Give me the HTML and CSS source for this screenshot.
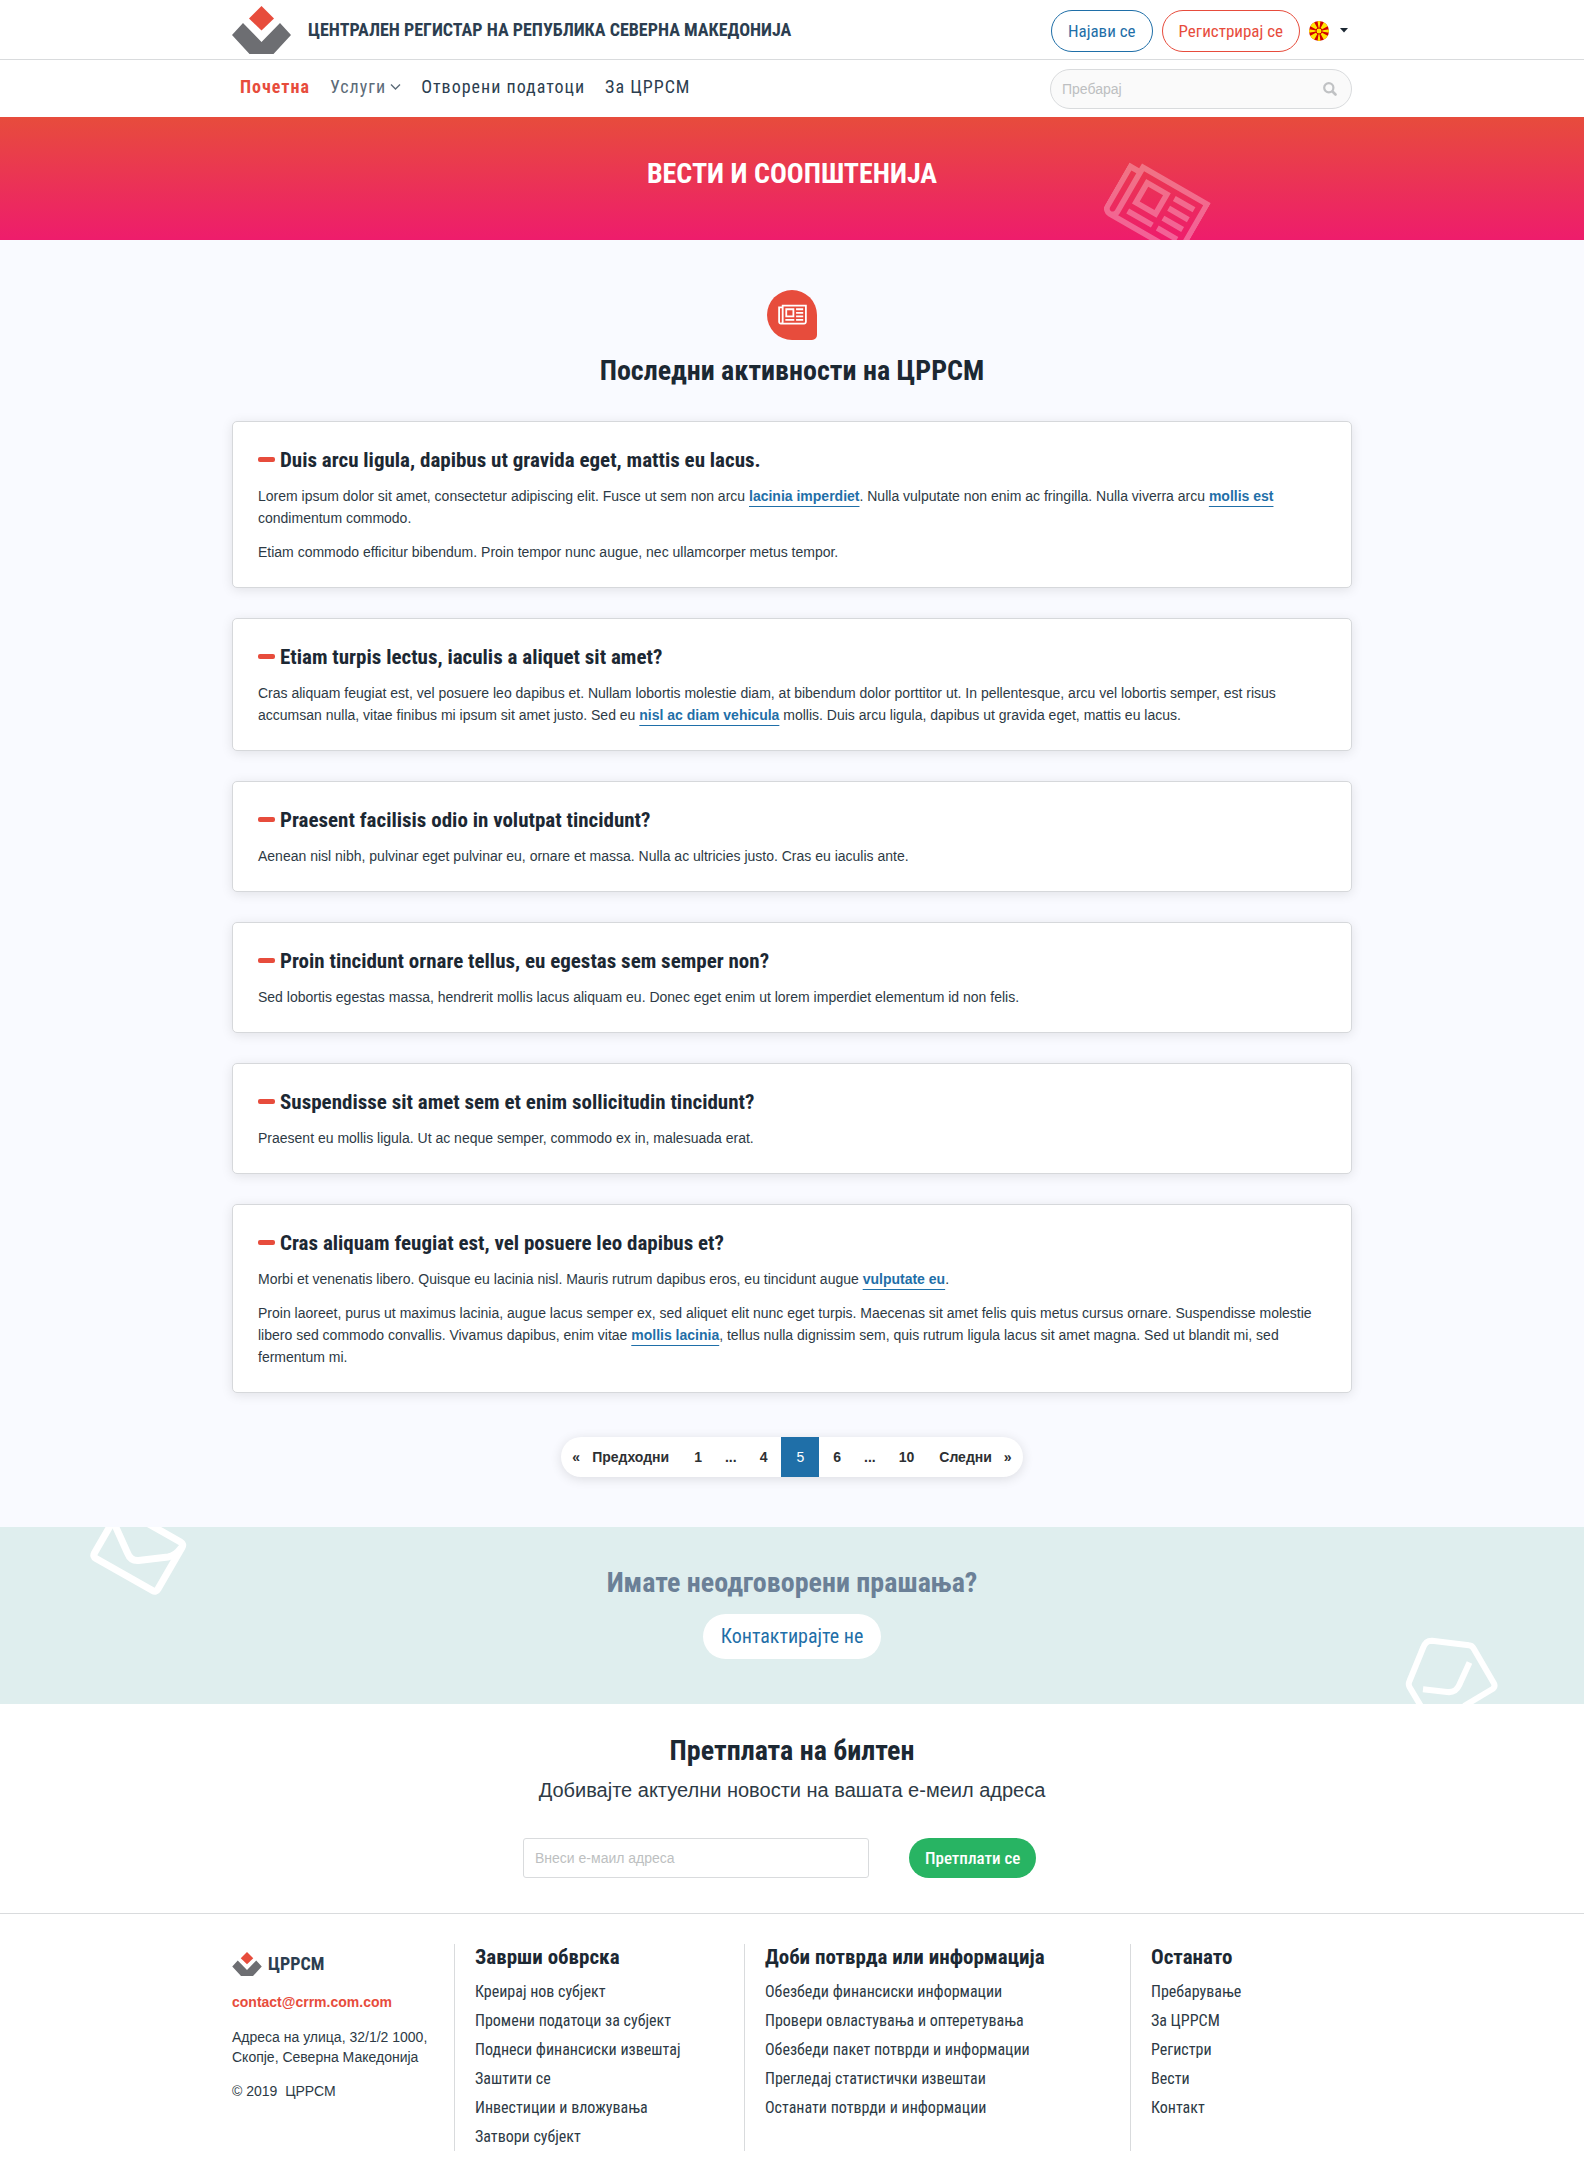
FILE: index.html
```html
<!DOCTYPE html>
<html lang="mk">
<head>
<meta charset="utf-8">
<meta name="viewport" content="width=device-width, initial-scale=1">
<title>Вести и соопштенија | ЦРРСМ</title>
<link rel="stylesheet" href="styles.css">
</head>
<body>
<svg class="sprite" aria-hidden="true">
  <symbol id="logo" viewBox="0 0 59 48">
    <path fill="#e74c3c" d="M29.5 0 42 12.500 29.500 24.500 17 12.500z"/>
    <path fill="#6d6e72" d="M11 17 29.500 36 48 17 59 29 41.500 48H17.500L0 29z"/>
  </symbol>
  <symbol id="news" viewBox="0 -128 2048 1792">
    <path fill="currentColor" d="M1024 384h-384v384h384v-384zm128 640v128h-640v-128h640zm0-768v640h-640v-640h640zm640 768v128h-512v-128h512zm0-256v128h-512v-128h512zm0-256v128h-512v-128h512zm0-256v128h-512v-128h512zm-1536 960v-960h-128v960q0 26 19 45t45 19 45-19 19-45zm1664 0v-1088h-1536v1088q0 33-11 64h1483q26 0 45-19t19-45zm128-1216v1216q0 80-56 136t-136 56h-1664q-80 0-136-56t-56-136v-1088h256v-128h1792z"/>
  </symbol>
</svg>

<header>
  <div class="topbar">
    <div class="container topbar-row">
      <a class="brand" href="#"><svg class="brand-logo" aria-hidden="true"><use href="#logo"/></svg><span>ЦЕНТРАЛЕН РЕГИСТАР НА РЕПУБЛИКА СЕВЕРНА МАКЕДОНИЈА</span></a>
      <div class="account">
        <a class="btn btn-blue" href="#">Најави се</a>
        <a class="btn btn-red" href="#">Регистрирај се</a>
        <button class="lang" type="button" aria-label="Јазик">
          <svg class="flag" viewBox="0 0 20 20" aria-hidden="true">
            <defs><clipPath id="disc"><circle cx="10" cy="10" r="10"/></clipPath></defs>
            <g clip-path="url(#disc)">
              <path fill="#d20000" d="M0 0h20v20H0z"/>
              <path fill="#ffe600" d="M8.500 0h3l-1.500 10zM8.500 20h3l-1.500-10zM0 8.200v3.600L10 10zM20 8.200v3.600L10 10zM1.500 0h3L10 10 0 4.500v-2zM18.500 0h-3L10 10l10-5.500v-2zM1.500 20h3L10 10 0 15.500v2zM18.500 20h-3L10 10l10 5.500v2z"/>
            </g>
            <circle cx="10" cy="10" r="3" fill="#ffe600" stroke="#d20000"/>
          </svg>
          <svg class="caret" viewBox="0 0 8 5" aria-hidden="true"><path fill="#1c2833" d="M0 0h8L4 4.500z"/></svg>
        </button>
      </div>
    </div>
  </div>
  <div class="container navbar">
    <nav>
      <ul class="menu">
        <li><a class="active" href="#">Почетна</a></li>
        <li><a class="open" href="#">Услуги<svg class="chevron" viewBox="0 0 11 8" aria-hidden="true"><path fill="none" stroke="currentColor" stroke-width="1.400" d="M1 1.500 5.500 6 10 1.500"/></svg></a></li>
        <li><a href="#">Отворени податоци</a></li>
        <li><a href="#">За ЦРРСМ</a></li>
      </ul>
    </nav>
    <form class="search" role="search">
      <input type="search" placeholder="Пребарај" aria-label="Пребарај">
      <button type="submit" aria-label="Пребарај"><svg viewBox="0 0 14 14" aria-hidden="true"><circle cx="5.800" cy="5.800" r="4.600" fill="none" stroke="currentColor" stroke-width="2.200"/><path stroke="currentColor" stroke-width="2.600" stroke-linecap="round" d="m9.500 9.500 3 3"/></svg></button>
    </form>
  </div>
</header>

<main>
  <section class="hero">
    <h1>ВЕСТИ И СООПШТЕНИЈА</h1>
    <svg class="hero-icon" aria-hidden="true"><use href="#news"/></svg>
  </section>

  <section class="news">
    <div class="container">
      <div class="badge"><svg aria-hidden="true"><use href="#news"/></svg></div>
      <h2>Последни активности на ЦРРСМ</h2>
      <div class="cards">
        <article class="card">
          <h3>Duis arcu ligula, dapibus ut gravida eget, mattis eu lacus.</h3>
          <p>Lorem ipsum dolor sit amet, consectetur adipiscing elit. Fusce ut sem non arcu <a href="#">lacinia imperdiet</a>. Nulla vulputate non enim ac fringilla. Nulla viverra arcu <a href="#">mollis est</a> condimentum commodo.</p>
          <p>Etiam commodo efficitur bibendum. Proin tempor nunc augue, nec ullamcorper metus tempor.</p>
        </article>
        <article class="card">
          <h3>Etiam turpis lectus, iaculis a aliquet sit amet?</h3>
          <p>Cras aliquam feugiat est, vel posuere leo dapibus et. Nullam lobortis molestie diam, at bibendum dolor porttitor ut. In pellentesque, arcu vel lobortis semper, est risus accumsan nulla, vitae finibus mi ipsum sit amet justo. Sed eu <a href="#">nisl ac diam vehicula</a> mollis. Duis arcu ligula, dapibus ut gravida eget, mattis eu lacus.</p>
        </article>
        <article class="card">
          <h3>Praesent facilisis odio in volutpat tincidunt?</h3>
          <p>Aenean nisl nibh, pulvinar eget pulvinar eu, ornare et massa. Nulla ac ultricies justo. Cras eu iaculis ante.</p>
        </article>
        <article class="card">
          <h3>Proin tincidunt ornare tellus, eu egestas sem semper non?</h3>
          <p>Sed lobortis egestas massa, hendrerit mollis lacus aliquam eu. Donec eget enim ut lorem imperdiet elementum id non felis.</p>
        </article>
        <article class="card">
          <h3>Suspendisse sit amet sem et enim sollicitudin tincidunt?</h3>
          <p>Praesent eu mollis ligula. Ut ac neque semper, commodo ex in, malesuada erat.</p>
        </article>
        <article class="card">
          <h3>Cras aliquam feugiat est, vel posuere leo dapibus et?</h3>
          <p>Morbi et venenatis libero. Quisque eu lacinia nisl. Mauris rutrum dapibus eros, eu tincidunt augue <a href="#">vulputate eu</a>.</p>
          <p>Proin laoreet, purus ut maximus lacinia, augue lacus semper ex, sed aliquet elit nunc eget turpis. Maecenas sit amet felis quis metus cursus ornare. Suspendisse molestie libero sed commodo convallis. Vivamus dapibus, enim vitae <a href="#">mollis lacinia</a>, tellus nulla dignissim sem, quis rutrum ligula lacus sit amet magna. Sed ut blandit mi, sed fermentum mi.</p>
        </article>
      </div>
      <nav class="pages" aria-label="Страници">
        <a class="step" href="#"><span>«</span><span>Предходни</span></a>
        <a href="#">1</a>
        <span class="dots">...</span>
        <a href="#">4</a>
        <a class="current" href="#" aria-current="page">5</a>
        <a href="#">6</a>
        <span class="dots">...</span>
        <a href="#">10</a>
        <a class="step" href="#"><span>Следни</span><span>»</span></a>
      </nav>
    </div>
  </section>

  <section class="contact">
    <svg class="envelope" viewBox="0 0 120 76" aria-hidden="true"><g fill="none" stroke="#fff" stroke-width="7" stroke-linejoin="round" stroke-linecap="round"><path d="M34-6 15.500 26q-2 3.500 1.500 5.500L73.500 63.500q3.500 2 5.500-1.500L103 20.500q2-3.500-1.500-5.500L61-8"/><path d="M35-4 48.500 26q3 8 11 7.500L89 30q7-1 13-9"/></g></svg>
    <svg class="phone" viewBox="0 0 105 72" aria-hidden="true"><g fill="none" stroke="#fff" stroke-width="6" stroke-linejoin="round"><path d="M22 76 9.500 55q-1.500-3 0-6L23 16q2.500-7.500 9-7.300L69 13.300q3 .3 4.500 3L94 51.500q1.500 3.500-1.500 5.500L64 74"/><path d="m23 57.300 24 2.700q8.500 1 12-6.500L69.500 30.500"/></g></svg>
    <h2>Имате неодговорени прашања?</h2>
    <a class="contact-btn" href="#">Контактирајте не</a>
  </section>

  <section class="newsletter">
    <h2>Претплата на билтен</h2>
    <p>Добивајте актуелни новости на вашата е-меил адреса</p>
    <form>
      <input type="email" placeholder="Внеси е-маил адреса" aria-label="Внеси е-маил адреса">
      <button type="submit">Претплати се</button>
    </form>
  </section>
</main>

<footer>
  <div class="container footer-cols">
    <div class="about">
      <a class="foot-brand" href="#"><svg aria-hidden="true"><use href="#logo"/></svg><span>ЦРРСМ</span></a>
      <a class="email" href="#">contact@crrm.com.com</a>
      <p>Адреса на улица, 32/1/2 1000,<br>Скопје, Северна Македонија</p>
      <p>© 2019 &nbsp;ЦРРСМ</p>
    </div>
    <div class="col">
      <h4>Заврши обврска</h4>
      <ul>
        <li><a href="#">Креирај нов субјект</a></li>
        <li><a href="#">Промени податоци за субјект</a></li>
        <li><a href="#">Поднеси финансиски извештај</a></li>
        <li><a href="#">Заштити се</a></li>
        <li><a href="#">Инвестиции и вложувања</a></li>
        <li><a href="#">Затвори субјект</a></li>
      </ul>
    </div>
    <div class="col">
      <h4>Доби потврда или информација</h4>
      <ul>
        <li><a href="#">Обезбеди финансиски информации</a></li>
        <li><a href="#">Провери овластувања и оптеретувања</a></li>
        <li><a href="#">Обезбеди пакет потврди и информации</a></li>
        <li><a href="#">Прегледај статистички извештаи</a></li>
        <li><a href="#">Останати потврди и информации</a></li>
      </ul>
    </div>
    <div class="col">
      <h4>Останато</h4>
      <ul>
        <li><a href="#">Пребарување</a></li>
        <li><a href="#">За ЦРРСМ</a></li>
        <li><a href="#">Регистри</a></li>
        <li><a href="#">Вести</a></li>
        <li><a href="#">Контакт</a></li>
      </ul>
    </div>
  </div>
</footer>
</body>
</html>
```
FILE: styles.css
```css
:root {
  --condensed: "Roboto Condensed", "Liberation Sans Narrow", Roboto, sans-serif;
  --red: #e74c3c;
  --blue: #1f6fa8;
  --ink: #1c2833;
  --text: #2c3e50;
  --line: #d9dbdd;
}

* { box-sizing: border-box; }

body {
  margin: 0;
  background: #fff;
  color: #2d3a45;
  font: 14px/22px "Liberation Sans", Arial, sans-serif;
}

a { color: inherit; text-decoration: none; }
h1, h2, h3, h4, p, ul { margin: 0; padding: 0; }
ul { list-style: none; }
button, input { font: inherit; }
button { border: 0; padding: 0; background: none; cursor: pointer; }
input::placeholder { color: #bdbfc1; opacity: 1; }

.sprite { display: none; }
.container { max-width: 1120px; margin: 0 auto; }

h1, h2 {
  color: var(--ink);
  font: 700 28px/34px var(--condensed);
  text-align: center;
}

/* Header */
.topbar { border-bottom: 1px solid var(--line); }
.topbar-row {
  display: flex;
  align-items: center;
  justify-content: space-between;
  height: 59px;
}
.brand {
  display: flex;
  align-items: center;
  gap: 17px;
  color: var(--text);
  font: 700 18px/24px var(--condensed);
}
.brand-logo { width: 59px; height: 48px; }
.account { display: flex; align-items: center; gap: 9px; padding-top: 2px; }
.btn {
  padding: 8px 16px;
  border: 1px solid;
  border-radius: 21px;
  font: 400 17px/24px var(--condensed);
}
.btn-blue { color: var(--blue); }
.btn-red { color: var(--red); }
.lang { display: flex; align-items: center; gap: 11px; padding-right: 4px; }
.flag { width: 20px; height: 20px; }
.caret { width: 8px; height: 5px; }

.navbar {
  display: flex;
  align-items: center;
  justify-content: space-between;
  height: 57px;
}
.menu {
  display: flex;
  gap: 20px;
  padding: 0 0 4px 8px;
  color: var(--text);
  font: 400 18px/24px var(--condensed);
  letter-spacing: 1px;
}
.menu .active { color: var(--red); font-weight: 700; }
.menu .open { color: #5c6b78; }
.chevron { width: 11px; height: 8px; margin-left: 4px; vertical-align: 2px; }
.search {
  display: flex;
  align-items: center;
  width: 302px;
  height: 40px;
  padding: 0 14px 0 11px;
  border: 1px solid var(--line);
  border-radius: 20px;
  background: #fafafa;
}
.search input {
  flex: 1;
  min-width: 0;
  padding: 0;
  border: 0;
  outline: 0;
  background: none;
}
.search button { display: flex; color: #c0c2c4; }
.search svg { width: 14px; height: 14px; }

/* Hero */
.hero {
  position: relative;
  overflow: hidden;
  padding: 40px 0 49px;
  background: linear-gradient(#e74c3c, #ee1c6c);
}
.hero h1 { color: #fff; }
.hero-icon {
  position: absolute;
  top: 53px;
  left: 70%;
  width: 91px;
  height: 80px;
  color: rgba(255, 255, 255, .3);
  transform: rotate(30deg);
}

/* News */
.news { padding: 50px 0; background: #f9faff; }
.badge {
  display: flex;
  align-items: center;
  justify-content: center;
  width: 50px;
  height: 50px;
  margin: 0 auto 14px;
  border-radius: 25px 25px 5px 25px;
  background: var(--red);
  color: #fff;
}
.badge svg { width: 29px; height: 25px; }
.cards { display: grid; gap: 30px; margin: 33px 0 44px; }
.card {
  display: grid;
  gap: 12px;
  padding: 26px 25px 24px;
  border: 1px solid #d6d8db;
  border-radius: 5px;
  background: #fff;
  box-shadow: 0 2px 12px rgba(0, 0, 0, .1);
}
.card h3 {
  display: flex;
  align-items: center;
  gap: 5px;
  color: var(--ink);
  font: 700 21px/25px var(--condensed);
}
.card h3::before {
  content: "";
  width: 17px;
  height: 5px;
  margin-bottom: 2px;
  border-radius: 2px;
  background: var(--red);
}
.card a {
  color: var(--blue);
  font-weight: 700;
  text-decoration: underline 1px;
  text-decoration-skip-ink: none;
  text-underline-offset: 5px;
}

.pages {
  display: flex;
  width: fit-content;
  margin: 0 auto;
  overflow: hidden;
  border-radius: 20px;
  background: #fff;
  box-shadow: 0 2px 12px rgba(0, 0, 0, .12);
  color: #2d3033;
  font-weight: 700;
  line-height: 40px;
}
.pages a { padding: 0 14px; }
.pages .dots { padding: 0 9px; }
.pages .step { display: flex; gap: 12px; padding: 0 11px; }
.pages .current {
  padding: 0 15px;
  background: var(--blue);
  color: #fff;
  font-weight: 400;
}

/* Contact strip */
.contact {
  position: relative;
  display: flex;
  flex-direction: column;
  align-items: center;
  gap: 14px;
  overflow: hidden;
  padding: 39px 0 45px;
  background: #dfeeee;
}
.contact h2 { color: #6b8097; }
.contact-btn {
  padding: 8px 18px;
  border-radius: 23px;
  background: #fff;
  color: var(--blue);
  font: 400 20px/29px var(--condensed);
}
.envelope { position: absolute; top: 0; left: 5%; width: 120px; height: 76px; }
.phone { position: absolute; right: 5%; bottom: 0; width: 105px; height: 72px; }

/* Newsletter */
.newsletter { padding: 30px 0 35px; text-align: center; }
.newsletter p { margin: 7px 0 33px; font-size: 20px; line-height: 30px; }
.newsletter form {
  display: flex;
  gap: 40px;
  max-width: 538px;
  margin: 0 auto;
}
.newsletter input {
  width: 346px;
  height: 40px;
  padding: 0 11px;
  border: 1px solid var(--line);
  border-radius: 3px;
}
.newsletter button {
  padding: 0 16px;
  border-radius: 20px;
  background: #28b463;
  color: #fff;
  font: 500 17px/40px var(--condensed);
}

/* Footer */
footer { padding: 30px 0 29px; border-top: 1px solid var(--line); }
.footer-cols { display: grid; grid-template-columns: 222fr 290fr 386fr 222fr; }
.about { display: flex; flex-direction: column; gap: 14px; align-items: flex-start; padding-top: 7px; }
.foot-brand {
  display: flex;
  align-items: center;
  gap: 6px;
  color: var(--text);
  font: 700 18px/26px var(--condensed);
}
.foot-brand svg { width: 30px; height: 24px; }
.email { color: var(--red); font-weight: 700; }
.about p { line-height: 20px; }
.col { min-height: 207px; padding-left: 20px; border-left: 1px solid var(--line); }
.col h4 {
  margin-bottom: 7px;
  color: var(--ink);
  font: 700 21px/26px var(--condensed);
}
.col li { font: 400 16px/29px var(--condensed); }
```
